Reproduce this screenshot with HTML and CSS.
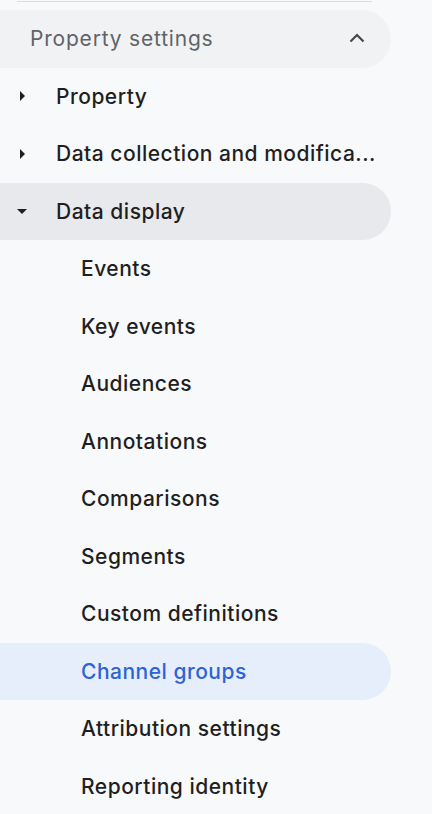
FILE: index.html
```html
<!DOCTYPE html>
<html lang="en">
<head>
<meta charset="utf-8">
<title>Property settings</title>
<link rel="stylesheet" href="styles.css">
</head>
<body>
<nav class="nav">
  <div class="divider"></div>
  <div class="section-header">
    <span class="section-title">Property settings</span>
    <svg class="chevron" viewBox="0 0 30 30" width="30" height="30"><polyline points="8.5,17.5 15,11 21.5,17.5"/></svg>
  </div>
  <ul class="menu">
    <li class="row top">
      <svg class="caret" viewBox="0 0 24 24" width="24" height="24"><path d="M10 17l5-5-5-5v10z"/></svg>
      <span class="label">Property</span>
    </li>
    <li class="row top">
      <svg class="caret" viewBox="0 0 24 24" width="24" height="24"><path d="M10 17l5-5-5-5v10z"/></svg>
      <span class="label">Data collection and modifica...</span>
    </li>
    <li class="row top open">
      <svg class="caret" viewBox="0 0 24 24" width="24" height="24"><path d="M7 10l5 5 5-5z"/></svg>
      <span class="label">Data display</span>
    </li>
    <li class="row sub"><span class="label">Events</span></li>
    <li class="row sub"><span class="label">Key events</span></li>
    <li class="row sub"><span class="label">Audiences</span></li>
    <li class="row sub"><span class="label">Annotations</span></li>
    <li class="row sub"><span class="label">Comparisons</span></li>
    <li class="row sub"><span class="label">Segments</span></li>
    <li class="row sub"><span class="label">Custom definitions</span></li>
    <li class="row sub active"><span class="label">Channel groups</span></li>
    <li class="row sub"><span class="label">Attribution settings</span></li>
    <li class="row sub"><span class="label">Reporting identity</span></li>
  </ul>
</nav>
</body>
</html>
```
FILE: styles.css
```css
html, body {
  margin: 0;
  padding: 0;
  background: #f8f9fb;
  height: 100%;
  overflow: hidden;
}
body {
  font-family: Inter, "Noto Sans", sans-serif;
  color: #1f1f1f;
}
.nav {
  width: 391px;
  padding-top: 1px;
}
.divider {
  height: 1px;
  background: #dcdde0;
  margin: 0 19px 8px 17px;
}
.section-header {
  height: 57.5px;
  display: flex;
  align-items: center;
  justify-content: space-between;
  padding: 0 19px 0 30px;
  background: #f1f2f4;
  border-radius: 0 29px 29px 0;
  box-sizing: border-box;
}
.section-title {
  font-size: 21px;
  color: #606368;
  letter-spacing: 0.8px;
}
.chevron {
  fill: none;
  stroke: #444746;
  stroke-width: 2.2;
  width: 30px;
  height: 30px;
}
.menu {
  list-style: none;
  margin: 0;
  padding: 0;
}
.row {
  height: 57.5px;
  display: flex;
  align-items: center;
  box-sizing: border-box;
  border-radius: 0 29px 29px 0;
  font-size: 21px;
  font-weight: 500;
  letter-spacing: 0.5px;
}
.row.top {
  padding-left: 10px;
}
.caret {
  width: 24px;
  height: 24px;
  fill: #1f1f1f;
  margin-right: 22px;
  flex: none;
}
.row.sub {
  padding-left: 81px;
}
.row.open {
  background: #e8e9ec;
}
.row.active {
  background: #e6eefb;
  color: #2d63d5;
}
.label {
  white-space: nowrap;
}
```
